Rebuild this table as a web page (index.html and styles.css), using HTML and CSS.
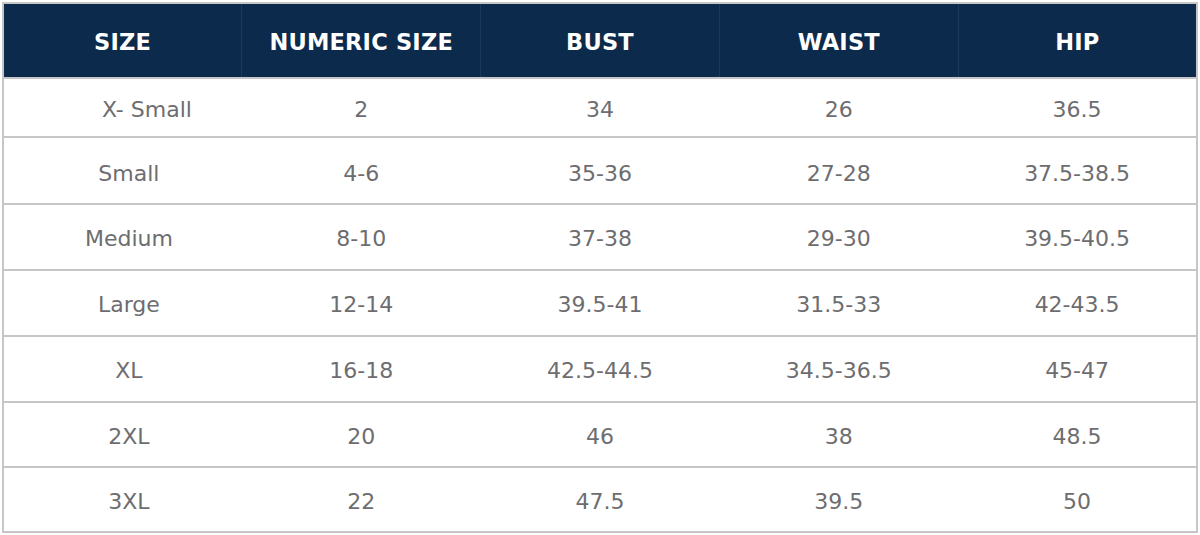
FILE: index.html
```html
<!DOCTYPE html>
<html lang="en">
<head>
<meta charset="utf-8">
<title>Size Chart</title>
<link rel="stylesheet" href="styles.css">
</head>
<body>
<div class="chart">
  <table class="size-table">
    <thead>
      <tr>
        <th>SIZE</th>
        <th>NUMERIC SIZE</th>
        <th>BUST</th>
        <th>WAIST</th>
        <th>HIP</th>
      </tr>
    </thead>
    <tbody>
      <tr class="r1"><td class="size shift">X- Small</td><td>2</td><td>34</td><td>26</td><td>36.5</td></tr>
      <tr class="r2"><td class="size">Small</td><td>4-6</td><td>35-36</td><td>27-28</td><td>37.5-38.5</td></tr>
      <tr class="r3"><td class="size">Medium</td><td>8-10</td><td>37-38</td><td>29-30</td><td>39.5-40.5</td></tr>
      <tr class="r4"><td class="size">Large</td><td>12-14</td><td>39.5-41</td><td>31.5-33</td><td>42-43.5</td></tr>
      <tr class="r5"><td class="size">XL</td><td>16-18</td><td>42.5-44.5</td><td>34.5-36.5</td><td>45-47</td></tr>
      <tr class="r6"><td class="size">2XL</td><td>20</td><td>46</td><td>38</td><td>48.5</td></tr>
      <tr class="r7"><td class="size">3XL</td><td>22</td><td>47.5</td><td>39.5</td><td>50</td></tr>
    </tbody>
  </table>
</div>
</body>
</html>
```
FILE: styles.css
```css
html, body {
  margin: 0;
  padding: 0;
  background: #ffffff;
}

.chart {
  padding: 2px 2px 0 2px;
  width: 1196px;
}

.size-table {
  width: 1196px;
  border-collapse: collapse;
  table-layout: fixed;
  font-family: "DejaVu Sans", "Open Sans", sans-serif;
  border: 2px solid #c6c6c6;
}

.size-table th {
  background: #0c2a4b;
  color: #ffffff;
  font-weight: 700;
  font-size: 22.5px;
  letter-spacing: 0.2px;
  height: 70px;
  padding: 3px 0 0 0;
  text-align: center;
  border-left: 1px solid #183a5e;
  border-bottom: 2px solid #c6c6c6;
}

.size-table th:first-child {
  border-left: none;
}

.size-table td {
  color: #6d6d70;
  font-size: 22px;
  font-weight: 400;
  text-align: center;
  padding: 3px 0 0 0;
  border-bottom: 2px solid #c6c6c6;
}

.size-table td.size {
  padding-left: 12px;
}

.size-table td.shift {
  padding-left: 48px;
}

.r1 td { height: 54px; }
.r2 td { height: 59px; padding-top: 6px; }
.r3 td { height: 61px; }
.r4 td { height: 61px; }
.r5 td { height: 61px; }
.r6 td { height: 60px; }
.r7 td { height: 60px; }
```
